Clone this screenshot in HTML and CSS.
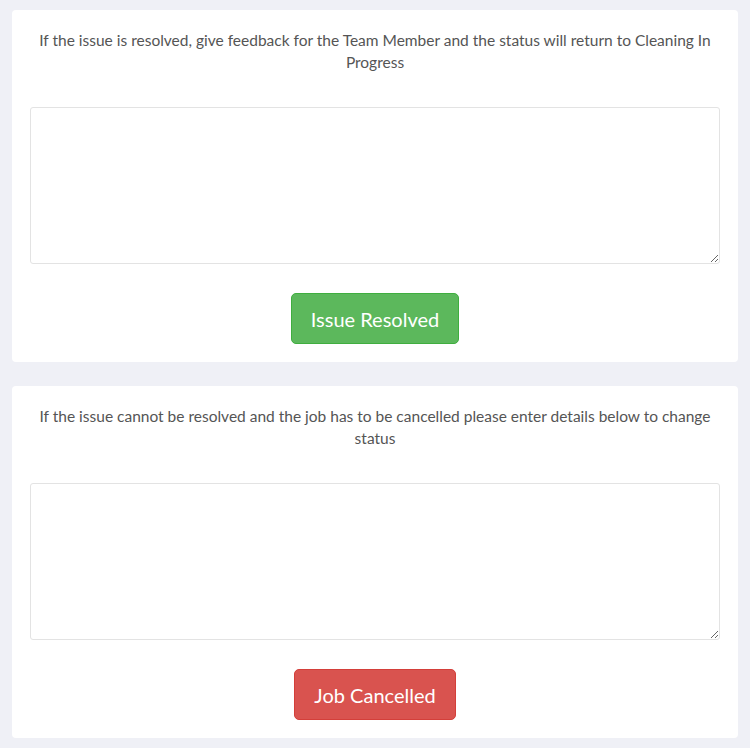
FILE: index.html
```html
<!DOCTYPE html>
<html lang="en">
    <head>
        <meta charset="UTF-8">
        <meta name="viewport" content="width=device-width, initial-scale=1.0">
        <title>Issue</title>
        <link rel="stylesheet" href="styles.css">
    </head>
    <body>
        <section class="panel">
            <p class="panel-text">If the issue is resolved, give feedback for the Team Member and the status will return to Cleaning In Progress</p>
            <textarea class="panel-input"></textarea>
            <div class="panel-actions">
                <button class="btn btn-success">Issue Resolved</button>
            </div>
        </section>

        <section class="panel">
            <p class="panel-text">If the issue cannot be resolved and the job has to be cancelled please enter details below to change status</p>
            <textarea class="panel-input"></textarea>
            <div class="panel-actions">
                <button class="btn btn-danger">Job Cancelled</button>
            </div>
        </section>
    </body>
</html>
```

FILE: styles.css
```css
* {
    padding: 0;
    margin: 0;
    box-sizing: border-box;
    font-family: Lato, "Open Sans", sans-serif;
}

body {
    background-color: #eff0f6;
    padding: 10px 12px;
    display: flex;
    flex-direction: column;
    gap: 24px;
}

.panel {
    background-color: #fff;
    border-radius: 4px;
    padding: 19px 18px 18px;
    display: flex;
    flex-direction: column;
}

.panel-text {
    color: #555;
    font-size: 15.5px;
    line-height: 22px;
    text-align: center;
    padding: 0 4px;
}

.panel-input {
    display: block;
    width: 100%;
    height: 157px;
    margin-top: 34px;
    border: 1px solid #e3e3e3;
    border-radius: 3px;
    resize: vertical;
}

.panel-actions {
    display: flex;
    justify-content: center;
    margin-top: 29px;
}

.btn {
    height: 51px;
    padding: 0 19px;
    font-size: 20px;
    color: #fff;
    border-radius: 5px;
    border: 1px solid;
}

.btn-success {
    background-color: #5cb85c;
    border-color: #3fae3f;
}

.btn-danger {
    background-color: #d9534f;
    border-color: #d43f3a;
}
```
